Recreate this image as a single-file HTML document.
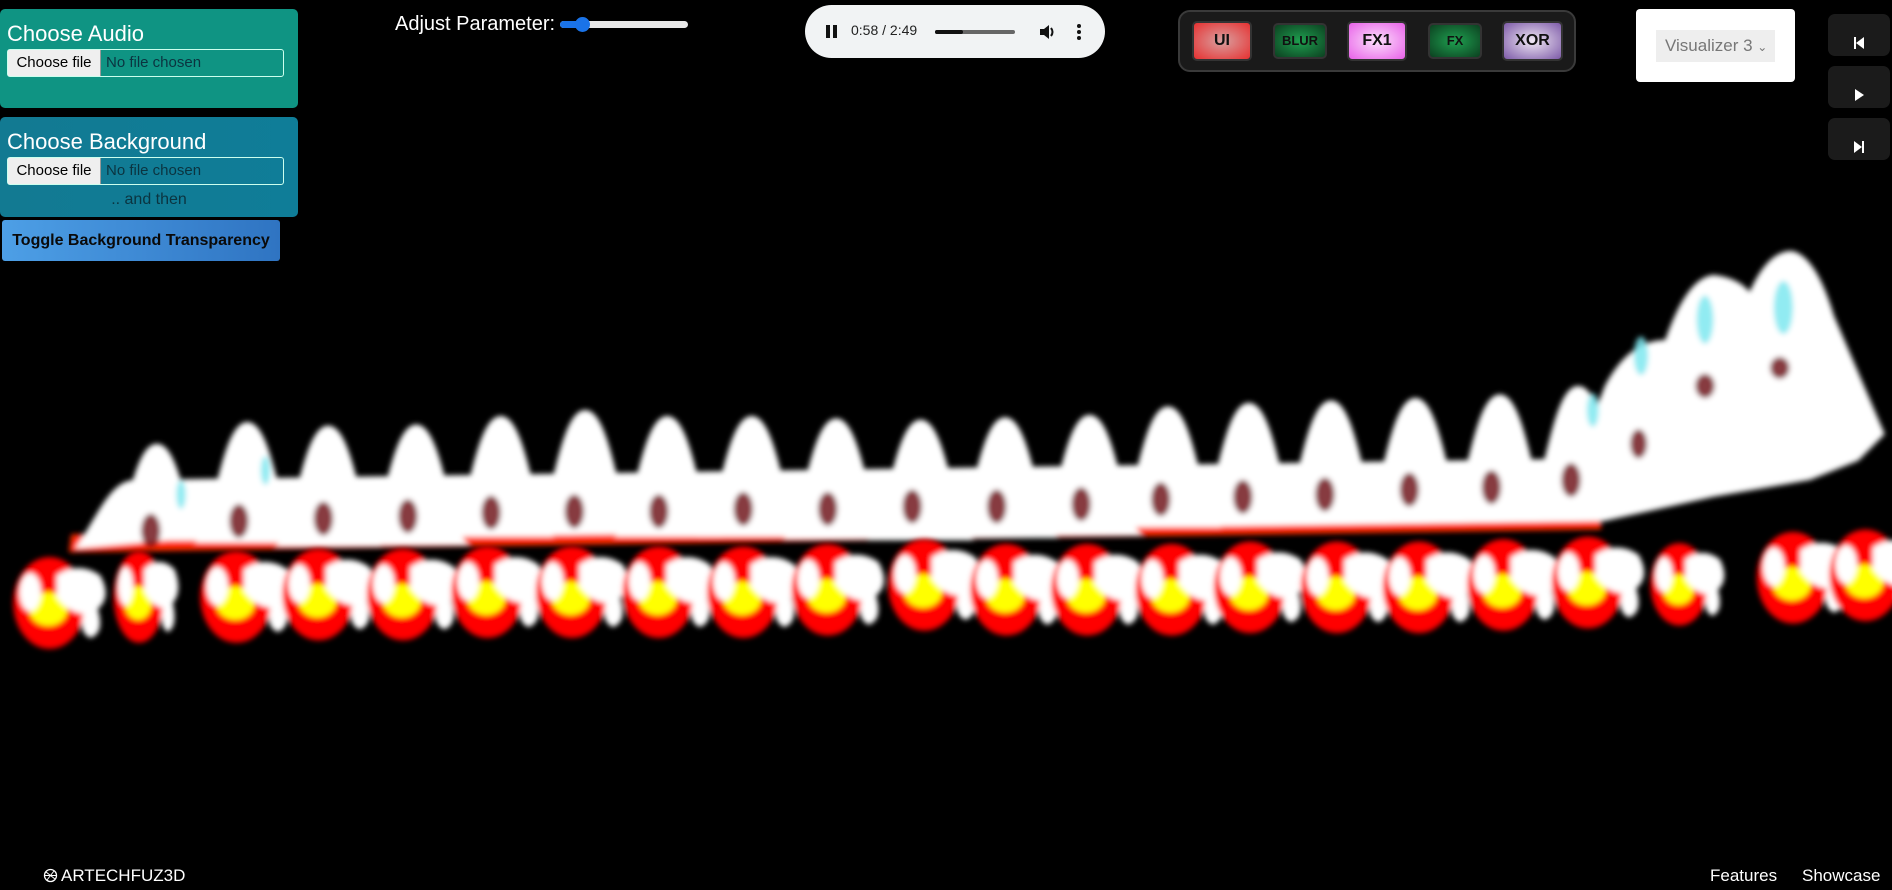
<!DOCTYPE html>
<html><head><meta charset="utf-8"><style>
html,body{margin:0;padding:0;background:#000;width:1892px;height:890px;overflow:hidden;font-family:"Liberation Sans",sans-serif;}
.abs{position:absolute;}
.panel{position:absolute;left:0;width:298px;border-radius:5px;}
.h{position:absolute;left:7px;color:#fff;font-size:22px;}
.file{position:absolute;left:7px;width:277px;height:28px;border:1px solid #cfe;border-radius:3px;box-sizing:border-box;font-size:15px;}
.file .b{position:absolute;left:0;top:0;bottom:0;width:92px;background:#efefef;color:#000;border-right:1px solid #999;line-height:26px;text-align:center;}
.file .t{position:absolute;left:98px;top:0;line-height:26px;color:#0b3440;}
.fx{position:absolute;top:21px;height:40px;border-radius:5px;box-sizing:border-box;border:2px solid #333;font-weight:bold;color:#111;text-align:center;line-height:36px;font-size:16px;}
.rb{position:absolute;left:1828px;width:62px;height:42px;background:#1b1b1b;border-radius:7px;}
</style></head><body>
<svg class="abs" style="left:0;top:0" width="1892" height="890" viewBox="0 0 1568 738" preserveAspectRatio="none">
<defs>
<filter id="bl" x="-10%" y="-10%" width="120%" height="120%"><feGaussianBlur stdDeviation="2.2"/></filter>
<g id="tooth"><path d="M-46,100 C-28,100 -24,0 0,0 C24,0 28,100 46,100 Z"/></g>
<g id="blob">
<ellipse cx="-4" cy="5" rx="30" ry="38" fill="#f00"/>
<ellipse cx="-5" cy="10" rx="16" ry="14" fill="#ff0"/>
<path d="M2,-18 Q20,-30 38,-18 Q48,0 36,10 Q42,30 30,34 Q20,30 24,14 Q10,12 2,0 Z" fill="#fff"/>
<ellipse cx="-20" cy="-4" rx="9" ry="16" fill="#fff"/>
</g>
</defs>
<g filter="url(#bl)">
<path d="M60,455 L1330,436 L1330,420 L62,440 Z" fill="#ff2a00" transform="translate(-3,3)"/>
<g fill="#fff">
<path d="M62,455 C80,430 90,400 110,398 L1330,380 L1330,432 L140,448 Z"/>
<use href="#tooth" transform="translate(130,368) scale(0.9,0.8)"/>
<use href="#tooth" transform="translate(205,350)"/>
<use href="#tooth" transform="translate(272,353)"/>
<use href="#tooth" transform="translate(345,352)"/>
<use href="#tooth" transform="translate(415,345)"/>
<use href="#tooth" transform="translate(485,340)"/>
<use href="#tooth" transform="translate(553,345)"/>
<use href="#tooth" transform="translate(623,345)"/>
<use href="#tooth" transform="translate(693,347)"/>
<use href="#tooth" transform="translate(763,348)"/>
<use href="#tooth" transform="translate(833,346)"/>
<use href="#tooth" transform="translate(903,344)"/>
<use href="#tooth" transform="translate(968,337)"/>
<use href="#tooth" transform="translate(1035,334)"/>
<use href="#tooth" transform="translate(1103,332)"/>
<use href="#tooth" transform="translate(1173,330)"/>
<use href="#tooth" transform="translate(1243,327)"/>
<use href="#tooth" transform="translate(1308,320)"/>
<path d="M1290,425 L1330,320 Q1350,282 1380,282 Q1398,230 1420,228 Q1440,230 1450,242 Q1465,208 1485,208 Q1505,212 1520,262 L1562,360 L1540,382 L1500,398 L1420,412 L1330,432 Z"/>
</g>
<g fill="#7ee8f0" opacity="0.85">
<ellipse cx="1413" cy="265" rx="7" ry="20"/><ellipse cx="1478" cy="255" rx="8" ry="22"/>
<ellipse cx="1360" cy="295" rx="6" ry="16"/><ellipse cx="1320" cy="340" rx="5" ry="14"/>
<ellipse cx="150" cy="410" rx="4" ry="12"/><ellipse cx="220" cy="390" rx="4" ry="12"/>
</g>
<g fill="#6a0a10" opacity="0.8">
<ellipse cx="125" cy="440" rx="8" ry="14"/><ellipse cx="198" cy="432" rx="8" ry="14"/><ellipse cx="268" cy="430" rx="8" ry="14"/><ellipse cx="338" cy="428" rx="8" ry="14"/><ellipse cx="407" cy="425" rx="8" ry="14"/><ellipse cx="476" cy="424" rx="8" ry="14"/><ellipse cx="546" cy="424" rx="8" ry="14"/><ellipse cx="616" cy="422" rx="8" ry="14"/><ellipse cx="686" cy="422" rx="8" ry="14"/><ellipse cx="756" cy="420" rx="8" ry="14"/><ellipse cx="826" cy="420" rx="8" ry="14"/><ellipse cx="896" cy="418" rx="8" ry="14"/><ellipse cx="962" cy="414" rx="8" ry="14"/><ellipse cx="1030" cy="412" rx="8" ry="14"/><ellipse cx="1098" cy="410" rx="8" ry="14"/><ellipse cx="1168" cy="406" rx="8" ry="14"/><ellipse cx="1236" cy="404" rx="8" ry="14"/><ellipse cx="1302" cy="398" rx="8" ry="14"/><ellipse cx="1358" cy="368" rx="7" ry="12"/><ellipse cx="1413" cy="320" rx="8" ry="10"/><ellipse cx="1475" cy="305" rx="8" ry="9"/>
</g>
</g>
<g filter="url(#bl)">
<use href="#blob" transform="translate(45,495)"/>
<use href="#blob" transform="translate(118,490) scale(0.7,1)"/>
<use href="#blob" transform="translate(200,490)"/>
<use href="#blob" transform="translate(268,488)"/>
<use href="#blob" transform="translate(338,488)"/>
<use href="#blob" transform="translate(408,486)"/>
<use href="#blob" transform="translate(478,486)"/>
<use href="#blob" transform="translate(550,486)"/>
<use href="#blob" transform="translate(620,486)"/>
<use href="#blob" transform="translate(690,484)"/>
<use href="#blob" transform="translate(770,480)"/>
<use href="#blob" transform="translate(838,484)"/>
<use href="#blob" transform="translate(905,484)"/>
<use href="#blob" transform="translate(975,484)"/>
<use href="#blob" transform="translate(1040,482)"/>
<use href="#blob" transform="translate(1112,482)"/>
<use href="#blob" transform="translate(1180,482)"/>
<use href="#blob" transform="translate(1250,480)"/>
<use href="#blob" transform="translate(1320,478)"/>
<use href="#blob" transform="translate(1395,480) scale(0.8,0.9)"/>
<use href="#blob" transform="translate(1490,474)"/>
<use href="#blob" transform="translate(1550,472)"/>
</g>
</svg>

<div class="panel" style="top:9px;height:99px;background:#0f9483;">
<div class="h" style="top:12px;">Choose Audio</div>
<div class="file" style="top:40px;"><div class="b">Choose file</div><div class="t">No file chosen</div></div>
</div>
<div class="panel" style="top:117px;height:100px;background:linear-gradient(90deg,#127a92,#0f7d98);">
<div class="h" style="top:12px;">Choose Background</div>
<div class="file" style="top:40px;"><div class="b">Choose file</div><div class="t">No file chosen</div></div>
<div class="abs" style="left:0;width:298px;top:74px;text-align:center;color:#0b3440;font-size:16px;">.. and then</div>
</div>
<div class="abs" style="left:2px;top:220px;width:278px;height:41px;border-radius:3px;background:linear-gradient(90deg,#4d9fe6,#2f74c2);color:#0a0a0a;font-weight:bold;font-size:16px;line-height:41px;text-align:center;">Toggle Background Transparency</div>

<div class="abs" style="left:395px;top:13px;color:#fff;font-size:20px;">Adjust Parameter:</div>
<div class="abs" style="left:560px;top:21px;width:128px;height:7px;border-radius:4px;background:#e8e8e8;"></div>
<div class="abs" style="left:560px;top:21px;width:24px;height:7px;border-radius:4px;background:#1a73e8;"></div>
<div class="abs" style="left:575px;top:17px;width:15px;height:15px;border-radius:50%;background:#1a73e8;"></div>

<div class="abs" style="left:805px;top:5px;width:300px;height:53px;border-radius:27px;background:#f1f3f4;"></div>
<div class="abs" style="left:826px;top:25px;width:4px;height:13px;background:#111;"></div>
<div class="abs" style="left:833px;top:25px;width:4px;height:13px;background:#111;"></div>
<div class="abs" style="left:851px;top:22px;font-size:14px;color:#222;">0:58 / 2:49</div>
<div class="abs" style="left:935px;top:30px;width:80px;height:4px;border-radius:2px;background:#666;"></div>
<div class="abs" style="left:935px;top:30px;width:28px;height:4px;border-radius:2px;background:#111;"></div>
<svg class="abs" style="left:1038px;top:23px" width="18" height="18" viewBox="0 0 18 18"><path d="M2,6 H6 L11,2 V16 L6,12 H2 Z" fill="#111"/><path d="M13,5 Q16,9 13,13" stroke="#111" stroke-width="2" fill="none"/></svg>
<div class="abs" style="left:1077px;top:24px;width:4px;height:4px;border-radius:50%;background:#111;box-shadow:0 6px 0 #111,0 12px 0 #111;"></div>

<div class="abs" style="left:1178px;top:10px;width:398px;height:62px;border-radius:12px;background:#1a1a1a;border:2px solid #3a3a3a;box-sizing:border-box;"></div>
<div class="fx" style="left:1192px;width:60px;background:radial-gradient(#d9a0a0,#e63030);">UI</div>
<div class="fx" style="left:1273px;top:23px;height:36px;line-height:32px;width:54px;font-size:13px;background:radial-gradient(#1fa050,#0c4020);">BLUR</div>
<div class="fx" style="left:1347px;width:60px;background:radial-gradient(#fce0fc,#e860e8);">FX1</div>
<div class="fx" style="left:1428px;top:23px;height:36px;line-height:32px;width:54px;font-size:13px;background:radial-gradient(#1fa050,#0c4020);">FX</div>
<div class="fx" style="left:1502px;width:61px;background:radial-gradient(#f0e8f4,#7d5aa8);">XOR</div>

<div class="abs" style="left:1636px;top:9px;width:159px;height:73px;border-radius:4px;background:#fff;"></div>
<div class="abs" style="left:1656px;top:30px;width:119px;height:32px;background:#eee;color:#777;font-size:17px;line-height:32px;padding-left:9px;box-sizing:border-box;">Visualizer 3 <span style="font-size:12px;">&#8964;</span></div>

<div class="rb" style="top:14px;"></div>
<div class="rb" style="top:66px;"></div>
<div class="rb" style="top:118px;"></div>
<svg class="abs" style="left:1852px;top:36px" width="14" height="14" viewBox="0 0 14 14"><rect x="2" y="1" width="2" height="12" fill="#fff"/><path d="M12,1 V13 L4,7 Z" fill="#fff"/></svg>
<svg class="abs" style="left:1852px;top:88px" width="14" height="14" viewBox="0 0 14 14"><path d="M3,1 V13 L12,7 Z" fill="#fff"/></svg>
<svg class="abs" style="left:1852px;top:140px" width="14" height="14" viewBox="0 0 14 14"><path d="M2,1 V13 L10,7 Z" fill="#fff"/><rect x="10" y="1" width="2" height="12" fill="#fff"/></svg>

<svg class="abs" style="left:43px;top:868px" width="15" height="15" viewBox="0 0 15 15"><circle cx="7.5" cy="7.5" r="6" fill="none" stroke="#fff" stroke-width="1.3"/><path d="M3,4 L12,11 M4,12 L11,3 M1.5,7.5 H13.5" stroke="#fff" stroke-width="1"/></svg>
<div class="abs" style="left:61px;top:866px;color:#fff;font-size:17px;">ARTECHFUZ3D</div>
<div class="abs" style="left:1710px;top:866px;color:#fff;font-size:17px;">Features</div>
<div class="abs" style="left:1802px;top:866px;color:#fff;font-size:17px;">Showcase</div>
</body></html>
